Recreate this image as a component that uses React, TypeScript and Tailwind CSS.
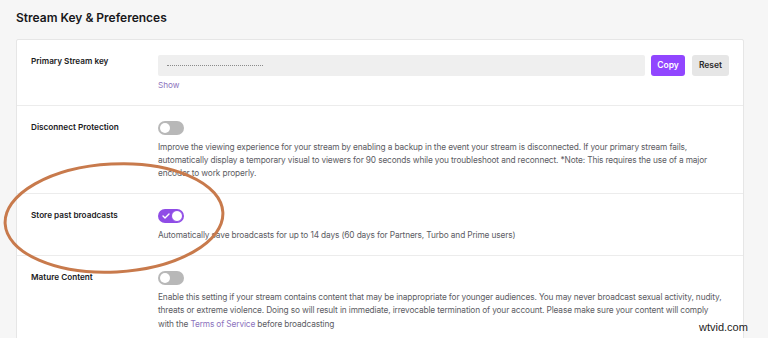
import React from "react";

function Toggle({ on }: { on?: boolean }) {
  if (on) {
    return (
      <div className="relative h-[14px] w-[26px] rounded-full bg-[#8f4ce6]">
        <svg className="absolute left-[4px] top-[4px]" width="8" height="6" viewBox="0 0 8 6">
          <path d="M1 3 L3 5 L7 1" stroke="#ffffff" strokeWidth="1.4" fill="none" strokeLinecap="round" strokeLinejoin="round" />
        </svg>
        <div className="absolute right-[1px] top-[1px] h-[12px] w-[12px] rounded-full border-[1.5px] border-[#8f4ce6] bg-white" />
      </div>
    );
  }
  return (
    <div className="relative h-[14px] w-[26px] rounded-full bg-[#b8b8b8]">
      <div className="absolute left-[2px] top-[2px] h-[10px] w-[10px] rounded-full bg-white" />
    </div>
  );
}

function Row({ label, children, last }: { label: string; children: React.ReactNode; last?: boolean }) {
  return (
    <div className={`flex pl-[14px] pr-[14px] pt-[15px] pb-[13px] ${last ? "" : "border-b border-[#ececec]"}`}>
      <div className="w-[127px] shrink-0 text-[8.2px] font-semibold leading-[13px] text-[#1a1a1d]">{label}</div>
      <div className="flex-1 min-w-0">{children}</div>
    </div>
  );
}

const desc = "mt-[6px] max-w-[568px] text-[8.3px] tracking-[-0.13px] leading-[13.1px] text-[#5c5c63]";

export default function App() {
  return (
    <div
      className="relative h-[338px] w-[768px] overflow-hidden bg-[#f6f6f6]"
      style={{ fontFamily: "Inter, 'Noto Sans', sans-serif" }}
    >
      <div className="px-[16px] pt-[9px]">
        <div className="h-[30px] text-[12px] font-semibold leading-[18px] text-[#18181b]">Stream Key &amp; Preferences</div>
        <div className="w-[728px] rounded-[2px] border border-[#e6e6e6] bg-white">
          <Row label="Primary Stream key">
            <div className="flex items-center gap-[6px]">
              <div className="flex h-[21px] flex-1 items-center rounded-[2px] bg-[#efefef] pl-[9px]">
                <div className="w-[96px] border-b border-dotted border-[#8a8a8a]" />
              </div>
              <button className="h-[21px] w-[34px] rounded-[3px] bg-[#9146ff] text-[8.5px] font-semibold text-white">Copy</button>
              <button className="ml-[1px] h-[21px] w-[37px] rounded-[3px] bg-[#e6e6e6] text-[8.5px] font-semibold text-[#2a2a2a]">Reset</button>
            </div>
            <div className="mt-[3px] text-[8.2px] leading-[13px] text-[#8b72bd]">Show</div>
          </Row>
          <Row label="Disconnect Protection">
            <Toggle />
            <div className={desc}>
              Improve the viewing experience for your stream by enabling a backup in the event your stream is disconnected. If your primary stream fails, automatically display a temporary visual to viewers for 90 seconds while you troubleshoot and reconnect. *Note: This requires the use of a major encoder to work properly.
            </div>
          </Row>
          <Row label="Store past broadcasts">
            <Toggle on />
            <div className={desc}>
              Automatically save broadcasts for up to 14 days (60 days for Partners, Turbo and Prime users)
            </div>
          </Row>
          <Row label="Mature Content" last>
            <Toggle />
            <div className={desc}>
              Enable this setting if your stream contains content that may be inappropriate for younger audiences. You may never broadcast sexual activity, nudity, threats or extreme violence. Doing so will result in immediate, irrevocable termination of your account. Please make sure your content will comply with the <span className="text-[#8b72bd]">Terms of Service</span> before broadcasting
            </div>
          </Row>
        </div>
      </div>
      <svg className="pointer-events-none absolute left-0 top-0" width="768" height="338" viewBox="0 0 768 338">
        <ellipse cx="114" cy="218" rx="109" ry="54" transform="rotate(-3 114 218)" fill="none" stroke="#c87a4c" strokeWidth="3" />
      </svg>
      <div className="absolute left-[699px] top-[320px] text-[11px] leading-[14px] text-[#222]" style={{ fontFamily: "'Liberation Sans', Arial, sans-serif" }}>
        wtvid.com
      </div>
    </div>
  );
}
